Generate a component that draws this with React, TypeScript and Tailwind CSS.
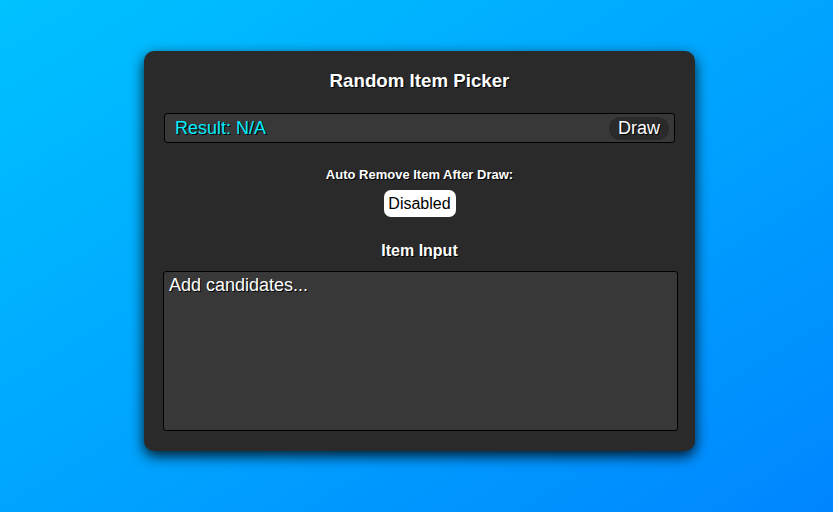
export default function App() {
    return (
        <div className="min-h-screen w-full bg-gradient-to-br from-[#00c2ff] to-[#0086ff] font-['Liberation_Sans',Arial,sans-serif] overflow-hidden">
            <div className="ml-[144px] pt-[51px]">
                <div className="w-[551px] h-[400px] bg-[#2a2a2a] rounded-[10px] shadow-[0_5px_14px_rgba(0,0,0,0.85)] px-[20px] pt-[19px] flex flex-col items-center text-white">
                    {/* Title */}
                    <h1 className="text-[18.72px] leading-[22px] font-bold [text-shadow:1px_1px_0_#000]">Random Item Picker</h1>

                    {/* Result bar */}
                    <div className="mt-[21px] w-[511px] h-[30px] bg-[#383838] border border-black rounded-[3px] flex items-center justify-between pl-[10px] pr-[5px]">
                        <span className="text-[18px] text-[#00eeff] [text-shadow:1px_1px_0_#000]">Result: N/A</span>
                        <button className="h-[23px] px-[9px] rounded-full bg-[#2a2a2a] text-[18px] leading-[23px] text-white [text-shadow:1px_1px_0_#000]">Draw</button>
                    </div>

                    {/* Auto remove toggle */}
                    <div className="mt-[24px] text-[13px] leading-[16px] font-bold [text-shadow:1px_1px_0_#000]">Auto Remove Item After Draw:</div>
                    <button className="mt-[7px] w-[72px] h-[27px] bg-white text-black rounded-[7px] text-[16px] leading-[27px]">Disabled</button>

                    {/* Item input */}
                    <div className="mt-[24px] text-[16px] leading-[20px] font-bold [text-shadow:1px_1px_0_#000]">Item Input</div>
                    <textarea
                        className="mt-[10px] ml-[2px] w-[515px] h-[160px] bg-[#383838] border border-black rounded-[3px] px-[5px] py-0 text-[18px] leading-[26px] text-white resize-none outline-none placeholder:text-white [text-shadow:1px_1px_0_#000]"
                        placeholder="Add candidates..."
                    />
                </div>
            </div>
        </div>
    );
}
